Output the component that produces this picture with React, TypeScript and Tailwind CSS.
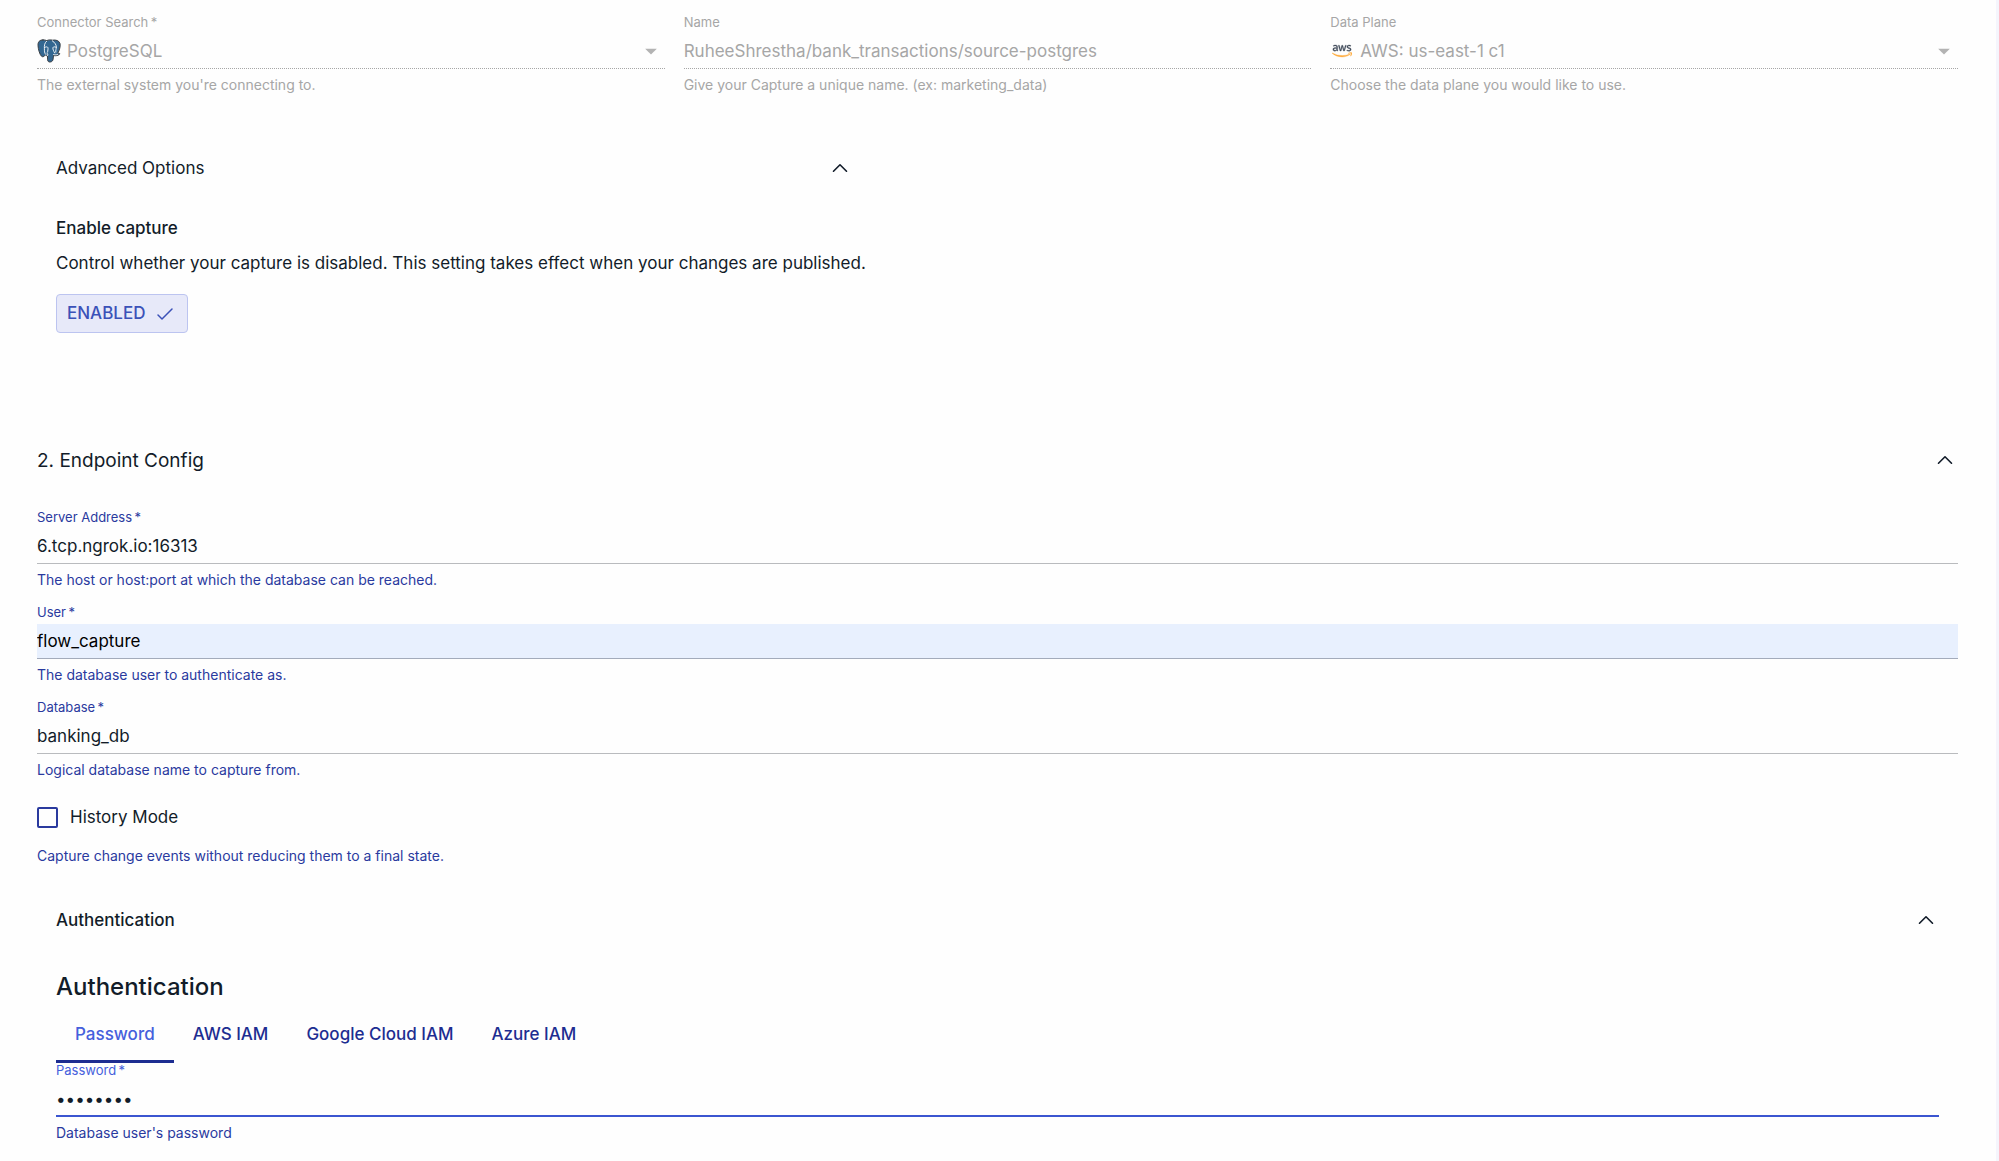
import { useState } from "react";
import type { ReactNode } from "react";
import { ChevronUp } from "lucide-react";
import { FaAws } from "react-icons/fa";

const tabs = ["Password", "AWS IAM", "Google Cloud IAM", "Azure IAM"];

function PostgresLogo() {
  return (
    <svg viewBox="0 0 24 24" className="h-6 w-6 shrink-0" strokeLinecap="round" strokeLinejoin="round" aria-hidden="true">
      <path
        d="M6 .9C2.500.8.8 3 1 6.500c.2 3.500 1.600 9 3.600 10.800 1 .9 2.200.3 3-.6l.9-.6c.6.500 1.300.7 2 .7l.1 4c.2 1.800 1.200 2.400 2.600 2.200 1.900-.2 2.700-1.300 2.900-3l.4-3.500c1.700.6 5 .1 6.200-1.400.4-.6-.4-.9-2-.8 1.800-3 3-7.500 2.300-9.800C22 1.500 18.800.6 15.500 1.200 13 .6 11.500.9 9.800 1.600 8.600 1.100 7.400.9 6 .9z"
        fill="#336791"
        stroke="#3a3f45"
        strokeWidth="1"
      />
      <g fill="none" stroke="#ffffff" strokeWidth="0.9">
        <path d="M9.600 2.200C7.600 3.800 7.200 6.500 7.400 9.500c.1 2.500-.2 4.500 1.400 6" />
        <path d="M7.500 8.600c1.300-1 3-1 3.400 0 .4 1.400-.2 3-.3 4.500" />
        <path d="M15.300 1.800c2.800 1.800 4 4.200 4 6.200 0 2-.8 3-.5 5.200" />
        <path d="M19.200 8.400c-1.200-.9-3-.7-3.300.3-.2 1.600.8 3.300 1.700 5.200" />
        <path d="M10.600 16.600c.4-.8.4-2.200-.6-2.400M16.600 15.600c.8.400 2.400.4 4-.2" />
      </g>
    </svg>
  );
}

function AwsLogo() {
  return (
    <>
      <svg width="0" height="0" className="absolute" aria-hidden="true">
        <linearGradient id="aws-fill" x1="0" y1="0" x2="0" y2="1">
          <stop offset="0.6" stopColor="#414b5a" />
          <stop offset="0.6" stopColor="#ffab3d" />
        </linearGradient>
      </svg>
      <FaAws
        size={20}
        fill="url(#aws-fill)"
        stroke="url(#aws-fill)"
        strokeWidth={10}
        className="mx-0.5 shrink-0"
        aria-hidden="true"
      />
    </>
  );
}

function DisabledField({ id, label, helper, children }: { id: string; label: string; helper: string; children: ReactNode }) {
  return (
    <div className="min-w-0 text-[#a6a6a6]">
      <label htmlFor={id} className="block text-[13px] leading-4">{label}</label>
      <div className="mt-1 flex h-[35px] items-center border-b border-dotted border-[#a6a6a6]">{children}</div>
      <p className="mt-1.5 text-sm leading-5">{helper}</p>
    </div>
  );
}

function DisabledSelect({ id, value }: { id: string; value: string }) {
  return (
    <>
      <select id={id} disabled className="h-full min-w-0 flex-1 appearance-none bg-transparent pt-0.5 pl-1.5 text-[17px] opacity-100">
        <option>{value}</option>
      </select>
      <svg viewBox="0 0 24 24" className="h-7 w-7 shrink-0 fill-[#b3b3b3]" aria-hidden="true">
        <path d="M7 10l5 5 5-5z" />
      </svg>
    </>
  );
}

type FieldProps = {
  id: string;
  label: string;
  helper: string;
  value: string;
  type?: string;
  labelClass?: string;
  inputClass?: string;
};

function Field({
  id,
  label,
  helper,
  value,
  type = "text",
  labelClass = "text-[#2a3a9e]",
  inputClass = "border-b border-[#b9bbbe]",
}: FieldProps) {
  return (
    <div>
      <label htmlFor={id} className={`block text-[13px] leading-4 ${labelClass}`}>{label}{"\u2009*"}</label>
      <input
        id={id}
        type={type}
        defaultValue={value}
        className={`mt-1 block h-[35px] w-full text-[17px] outline-none ${inputClass}`}
      />
      <p className="mt-1.5 text-sm leading-5 text-[#2a3a9e]">{helper}</p>
    </div>
  );
}

function SectionHeader({ title, className }: { title: string; className: string }) {
  return (
    <button type="button" aria-expanded="true" className={`flex h-12 w-full items-center justify-between text-left ${className}`}>
      <span className="pt-0.5">{title}</span>
      <ChevronUp size={26} strokeWidth={1.5} />
    </button>
  );
}

export default function App() {
  const [active, setActive] = useState("Password");

  return (
    <div className="min-h-screen bg-[#f5f5fc] pr-[3px] font-['Inter',sans-serif] text-[#121c29]">
      <main className="min-h-screen bg-[#fefefe] pt-3.5 pr-[38px] pb-4 pl-[37px]">
        <section className="grid grid-cols-3 gap-[19px]">
          <DisabledField id="connector" label={"Connector Search\u2009*"} helper="The external system you're connecting to.">
            <PostgresLogo />
            <DisabledSelect id="connector" value="PostgreSQL" />
          </DisabledField>
          <DisabledField id="name" label="Name" helper="Give your Capture a unique name. (ex: marketing_data)">
            <input
              id="name"
              disabled
              defaultValue="RuheeShrestha/bank_transactions/source-postgres"
              className="h-full w-full text-[17px]"
            />
          </DisabledField>
          <DisabledField id="plane" label="Data Plane" helper="Choose the data plane you would like to use.">
            <AwsLogo />
            <DisabledSelect id="plane" value="AWS: us-east-1 c1" />
          </DisabledField>
        </section>

        <section className="mt-[49px] ml-[19px] w-full max-w-[797px]">
          <SectionHeader title="Advanced Options" className="text-[17px]" />
          <h3 className="mt-6 text-[17px] leading-6 font-medium">Enable capture</h3>
          <p className="mt-[11px] text-[17px] leading-6 lg:whitespace-nowrap">
            Control whether your capture is disabled. This setting takes effect when your changes are published.
          </p>
          <button
            type="button"
            aria-pressed="true"
            className="mt-[19px] flex h-[39px] items-center gap-2 rounded border border-[#bcc4f0] bg-[#e7e9f9] px-2.5 text-[17px] font-medium text-[#3b51b8]"
          >
            ENABLED
            <svg viewBox="0 0 24 24" className="h-6 w-6" fill="none" stroke="currentColor" strokeWidth="1.5" strokeLinecap="round" strokeLinejoin="round" aria-hidden="true">
              <path d="M5 13l4 4L19 7" />
            </svg>
          </button>
        </section>

        <section className="mt-[103px]">
          <SectionHeader title="2. Endpoint Config" className="text-[19px]" />
          <div className="mt-[25px] flex flex-col gap-3.5">
            <Field
              id="address"
              label="Server Address"
              value="6.tcp.ngrok.io:16313"
              helper="The host or host:port at which the database can be reached."
            />
            <Field
              id="user"
              label="User"
              value="flow_capture"
              helper="The database user to authenticate as."
              inputClass="border-b border-[#a3abbb] bg-[#e8f0fe] text-black"
            />
            <Field id="database" label="Database" value="banking_db" helper="Logical database name to capture from." />
          </div>

          <div className="mt-[25px] flex h-6 items-center gap-3">
            <input
              id="history"
              type="checkbox"
              className="h-[21px] w-[21px] appearance-none rounded-xs border-2 border-[#2a3a9e]"
            />
            <label htmlFor="history" className="pt-0.5 text-[17px]">History Mode</label>
          </div>
          <p className="mt-[17px] text-sm leading-5 text-[#2a3a9e]">
            Capture change events without reducing them to a final state.
          </p>

          <div className="mt-[30px] px-[19px]">
            <SectionHeader title="Authentication" className="text-[17px] font-medium" />
            <h2 className="mt-[27px] text-2xl leading-8 font-medium">Authentication</h2>
            <div role="tablist" className="mt-1 -mb-px flex h-14">
              {tabs.map((tab) => (
                <button
                  key={tab}
                  type="button"
                  role="tab"
                  aria-selected={tab === active}
                  onClick={() => setActive(tab)}
                  className={`border-y-3 border-t-transparent px-[19px] text-[17px] font-medium ${
                    tab === active ? "border-b-[#1d2d91] text-[#4560dc]" : "border-b-transparent text-[#1d2d91]"
                  }`}
                >
                  {tab}
                </button>
              ))}
            </div>
            <Field
              id="password"
              type="password"
              label="Password"
              value="postgres"
              helper="Database user's password"
              labelClass="text-[#4560dc]"
              inputClass="border-b-2 border-[#3b55d0]"
            />
          </div>
        </section>
      </main>
    </div>
  );
}
